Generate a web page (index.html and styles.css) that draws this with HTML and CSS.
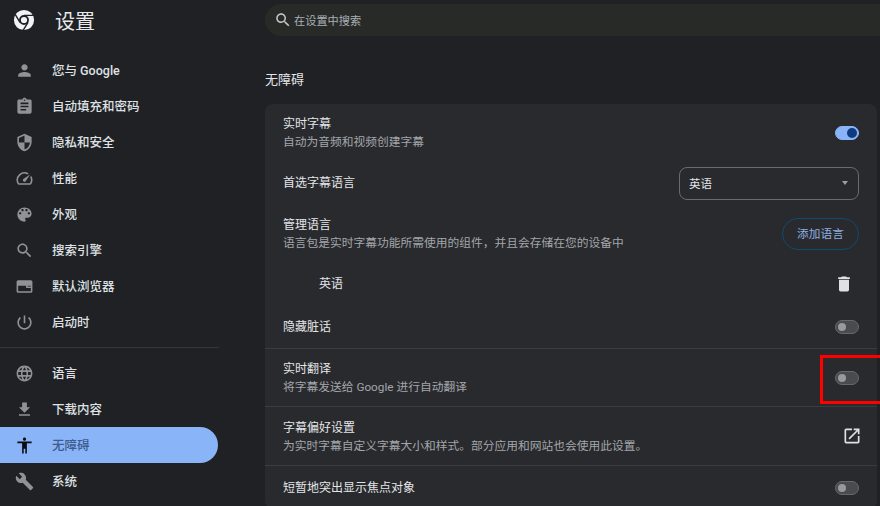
FILE: index.html
```html
<!DOCTYPE html>
<html lang="zh-CN">
<head>
<meta charset="utf-8">
<title>设置</title>
<link rel="stylesheet" href="styles.css">
</head>
<body>
<div class="app">
  <aside class="sidebar">
    <header class="brand">
      <svg class="logo" viewBox="0 0 24 24"><path class="logo-fill" fill-rule="evenodd" d="M12 1a11 11 0 1 1 0 22 11 11 0 0 1 0-22zm0 5.6a5.4 5.4 0 1 0 0 10.8 5.4 5.4 0 0 0 0-10.8z"/><circle class="logo-fill" cx="12" cy="12" r="3.4"/><path class="logo-cut" d="M12 6.9h10.2M7.6 14.6 2.4 5.8M16.4 14.6 11 23.4"/></svg>
      <h1 class="brand-title">设置</h1>
    </header>
    <nav class="nav">
      <a class="nav-item"><svg class="nav-icon" viewBox="0 0 24 24"><path d="M12 12c2.21 0 4-1.79 4-4s-1.79-4-4-4-4 1.79-4 4 1.79 4 4 4zm0 2c-2.67 0-8 1.34-8 4v2h16v-2c0-2.66-5.33-4-8-4z"/></svg><span class="nav-label">您与 Google</span></a>
      <a class="nav-item"><svg class="nav-icon" viewBox="0 0 24 24"><path d="M19 3h-4.18C14.4 1.84 13.3 1 12 1c-1.3 0-2.4.84-2.82 2H5c-1.1 0-2 .9-2 2v14c0 1.1.9 2 2 2h14c1.1 0 2-.9 2-2V5c0-1.1-.9-2-2-2zm-7 0c.55 0 1 .45 1 1s-.45 1-1 1-1-.45-1-1 .45-1 1-1zm2 14H7v-2h7v2zm3-4H7v-2h10v2zm0-4H7V7h10v2z"/></svg><span class="nav-label">自动填充和密码</span></a>
      <a class="nav-item"><svg class="nav-icon" viewBox="0 0 24 24"><path d="M12 1L3 5v6c0 5.55 3.84 10.74 9 12 5.16-1.26 9-6.45 9-12V5l-9-4zm0 10.99h7c-.53 4.12-3.28 7.79-7 8.94V12H5V6.3l7-3.11v8.8z"/></svg><span class="nav-label">隐私和安全</span></a>
      <a class="nav-item"><svg class="nav-icon" viewBox="0 0 24 24"><path d="M20.38 8.57l-1.23 1.85a8 8 0 0 1-.22 7.58H5.07A8 8 0 0 1 15.58 6.85l1.85-1.23A10 10 0 0 0 3.35 19a2 2 0 0 0 1.72 1h13.85a2 2 0 0 0 1.74-1 10 10 0 0 0-.27-10.44zm-9.79 6.84a2 2 0 0 0 2.83 0l5.66-8.49-8.49 5.66a2 2 0 0 0 0 2.83z"/></svg><span class="nav-label">性能</span></a>
      <a class="nav-item"><svg class="nav-icon" viewBox="0 0 24 24"><path d="M12 3c-4.97 0-9 4.03-9 9s4.03 9 9 9c.83 0 1.5-.67 1.5-1.5 0-.39-.15-.74-.39-1.01-.23-.26-.38-.61-.38-.99 0-.83.67-1.5 1.5-1.5H16c2.76 0 5-2.24 5-5 0-4.42-4.03-8-9-8zm-5.5 9c-.83 0-1.5-.67-1.5-1.5S5.67 9 6.5 9 8 9.67 8 10.5 7.33 12 6.5 12zm3-4C8.67 8 8 7.33 8 6.5S8.67 5 9.5 5s1.5.67 1.5 1.5S10.33 8 9.5 8zm5 0c-.83 0-1.5-.67-1.5-1.5S13.67 5 14.5 5s1.5.67 1.5 1.5S15.33 8 14.5 8zm3 4c-.83 0-1.5-.67-1.5-1.5S16.67 9 17.5 9s1.5.67 1.5 1.5-.67 1.5-1.5 1.5z"/></svg><span class="nav-label">外观</span></a>
      <a class="nav-item"><svg class="nav-icon" viewBox="0 0 24 24"><path d="M15.5 14h-.79l-.28-.27C15.41 12.59 16 11.11 16 9.5 16 5.91 13.09 3 9.5 3S3 5.91 3 9.5 5.91 16 9.5 16c1.61 0 3.09-.59 4.23-1.57l.27.28v.79l5 4.99L20.49 19l-4.99-5zm-6 0C7.01 14 5 11.99 5 9.5S7.01 5 9.5 5 14 7.01 14 9.5 11.99 14 9.5 14z"/></svg><span class="nav-label">搜索引擎</span></a>
      <a class="nav-item"><svg class="nav-icon" viewBox="0 0 24 24"><path d="M20 4H4c-1.1 0-2 .9-2 2v12c0 1.1.9 2 2 2h16c1.1 0 2-.9 2-2V6c0-1.1-.9-2-2-2zm0 14H4v-7h10v3h6v4zm0-6h-4v-1h4v1z"/></svg><span class="nav-label">默认浏览器</span></a>
      <a class="nav-item"><svg class="nav-icon" viewBox="0 0 24 24"><path d="M13 3h-2v10h2V3zm4.83 2.17l-1.42 1.42C17.99 7.86 19 9.81 19 12c0 3.87-3.13 7-7 7s-7-3.13-7-7c0-2.19 1.01-4.14 2.58-5.42L6.17 5.17C4.23 6.82 3 9.26 3 12c0 4.97 4.03 9 9 9s9-4.03 9-9c0-2.74-1.23-5.18-3.17-6.83z"/></svg><span class="nav-label">启动时</span></a>
      <hr class="nav-divider">
      <a class="nav-item"><svg class="nav-icon" viewBox="0 0 24 24"><path d="M11.99 2C6.47 2 2 6.48 2 12s4.47 10 9.99 10C17.52 22 22 17.52 22 12S17.52 2 11.99 2zm6.93 6h-2.95c-.32-1.25-.78-2.45-1.38-3.56 1.84.63 3.37 1.91 4.33 3.56zM12 4.04c.83 1.2 1.48 2.53 1.91 3.96h-3.82c.43-1.43 1.08-2.76 1.91-3.96zM4.26 14C4.1 13.36 4 12.69 4 12s.1-1.36.26-2h3.38c-.08.66-.14 1.32-.14 2 0 .68.06 1.34.14 2H4.26zm.82 2h2.95c.32 1.25.78 2.45 1.38 3.56-1.84-.63-3.37-1.9-4.33-3.56zm2.95-8H5.08c.96-1.66 2.49-2.93 4.33-3.56C8.81 5.55 8.35 6.75 8.03 8zM12 19.96c-.83-1.2-1.48-2.53-1.91-3.96h3.82c-.43 1.43-1.08 2.76-1.91 3.96zM14.34 14H9.66c-.09-.66-.16-1.32-.16-2 0-.68.07-1.35.16-2h4.68c.09.65.16 1.32.16 2 0 .68-.07 1.34-.16 2zm.25 5.56c.6-1.11 1.06-2.31 1.38-3.56h2.95c-.96 1.65-2.49 2.93-4.33 3.56zM16.36 14c.08-.66.14-1.32.14-2 0-.68-.06-1.34-.14-2h3.38c.16.64.26 1.31.26 2s-.1 1.36-.26 2h-3.38z"/></svg><span class="nav-label">语言</span></a>
      <a class="nav-item"><svg class="nav-icon" viewBox="0 0 24 24"><path d="M19 9h-4V3H9v6H5l7 7 7-7zM5 18v2h14v-2H5z"/></svg><span class="nav-label">下载内容</span></a>
      <a class="nav-item nav-item-active"><svg class="nav-icon" viewBox="0 0 24 24"><path d="M12 2c1.1 0 2 .9 2 2s-.9 2-2 2-2-.9-2-2 .9-2 2-2zm9 7h-6v13h-2v-6h-2v6H9V9H3V7h18v2z"/></svg><span class="nav-label">无障碍</span></a>
      <a class="nav-item"><svg class="nav-icon" viewBox="0 0 24 24"><path d="M22.7 19l-9.1-9.1c.9-2.3.4-5-1.5-6.9-2-2-5-2.4-7.4-1.3L9 6 6 9 1.6 4.7C.4 7.1.9 10.1 2.9 12.1c1.9 1.9 4.6 2.4 6.9 1.5l9.1 9.1c.4.4 1 .4 1.4 0l2.3-2.3c.5-.4.5-1.1.1-1.4z"/></svg><span class="nav-label">系统</span></a>
    </nav>
  </aside>
  <main class="main">
    <div class="search">
      <svg class="search-icon" viewBox="0 0 24 24"><path d="M15.5 14h-.79l-.28-.27C15.41 12.59 16 11.11 16 9.5 16 5.91 13.09 3 9.5 3S3 5.91 3 9.5 5.91 16 9.5 16c1.61 0 3.09-.59 4.23-1.57l.27.28v.79l5 4.99L20.49 19l-4.99-5zm-6 0C7.01 14 5 11.99 5 9.5S7.01 5 9.5 5 14 7.01 14 9.5 11.99 14 9.5 14z"/></svg>
      <span class="search-text">在设置中搜索</span>
    </div>
    <h2 class="section-title">无障碍</h2>
    <section class="card">
      <div class="row row-first">
        <div class="row-text"><div class="row-title">实时字幕</div><div class="row-sub">自动为音频和视频创建字幕</div></div>
        <span class="toggle toggle-on"></span>
      </div>
      <div class="row row-select">
        <div class="row-title">首选字幕语言</div>
        <div class="select"><span>英语</span><span class="select-caret"></span></div>
      </div>
      <div class="row row-tall">
        <div class="row-text"><div class="row-title">管理语言</div><div class="row-sub">语言包是实时字幕功能所需使用的组件，并且会存储在您的设备中</div></div>
        <button class="btn">添加语言</button>
      </div>
      <div class="row row-lang">
        <div class="row-title">英语</div>
        <svg class="row-icon row-icon-trash" viewBox="0 0 24 24"><path d="M6 19c0 1.1.9 2 2 2h8c1.1 0 2-.9 2-2V7H6v12zM19 4h-3.5l-1-1h-5l-1 1H5v2h14V4z"/></svg>
      </div>
      <div class="row row-short">
        <div class="row-title">隐藏脏话</div>
        <span class="toggle"></span>
      </div>
      <div class="row row-tall row-sep">
        <div class="row-text"><div class="row-title">实时翻译</div><div class="row-sub">将字幕发送给 Google 进行自动翻译</div></div>
        <span class="toggle"></span>
      </div>
      <div class="row row-first row-sep">
        <div class="row-text"><div class="row-title">字幕偏好设置</div><div class="row-sub">为实时字幕自定义字幕大小和样式。部分应用和网站也会使用此设置。</div></div>
        <svg class="row-icon" viewBox="0 0 24 24"><path d="M19 19H5V5h7V3H5a2 2 0 0 0-2 2v14a2 2 0 0 0 2 2h14c1.1 0 2-.9 2-2v-7h-2v7zM14 3v2h3.59l-9.83 9.83 1.41 1.41L19 6.41V10h2V3h-7z"/></svg>
      </div>
      <div class="row row-short row-sep">
        <div class="row-title">短暂地突出显示焦点对象</div>
        <span class="toggle"></span>
      </div>
    </section>
  </main>
</div>
<div class="highlight"></div>
</body>
</html>
```
FILE: styles.css
```css
* { box-sizing: border-box; }
html, body { margin: 0; height: 100%; overflow: hidden; }
body {
  background: #202124;
  color: #e8eaed;
  font-family: Roboto, "Noto Sans CJK SC", sans-serif;
  font-size: 12px;
  position: relative;
}
.app { display: flex; height: 506px; overflow: hidden; }
.sidebar { width: 265px; flex: none; padding-right: 47px; }
.brand { height: 52px; display: flex; align-items: flex-start; padding: 9px 0 0 13px; gap: 20px; }
.logo { width: 22px; height: 22px; flex: none; }
.logo-fill { fill: #f1f3f4; }
.logo-cut { fill: none; stroke: #202124; stroke-width: 1.5; }
.brand-title { margin: 0; font-size: 20px; line-height: 26px; font-weight: 400; color: #e8eaed; }
.nav { display: flex; flex-direction: column; }
.nav-item { display: flex; align-items: center; height: 36px; padding-left: 15px; gap: 18px; font-size: 12.5px; font-weight: 500; color: #dfe1e4; border-radius: 0 18px 18px 0; }
.nav-label { margin-bottom: 2px; }
.nav-icon { width: 19px; height: 19px; flex: none; fill: #8f9398; }
.nav-item-active { background: #8ab4f8; color: #3e5c8e; }
.nav-item-active .nav-icon { fill: #0c0d10; }
.nav-divider { margin: 7px 0; border: 0; border-top: 1px solid #36373a; width: 219px; }
.main { flex: 1; min-width: 0; padding: 4px 3px 0 0; display: flex; flex-direction: column; }
.search { height: 32px; flex: none; margin-right: -3px; background: #282a28; border-radius: 16px 0 0 16px; display: flex; align-items: center; padding-left: 9px; gap: 2px; }
.search-icon { width: 18px; height: 18px; fill: #c4c7cb; flex: none; }
.search-text { font-size: 11.2px; color: #a9afb4; }
.section-title { margin: 35px 0 15px; font-size: 13px; line-height: 18px; font-weight: 400; color: #e3e5e8; }
.card { flex: none; background: #292a2d; border-radius: 8px; padding: 0 18px; }
.row { display: flex; align-items: center; justify-content: space-between; }
.row-tall { height: 58px; }
.row-first { height: 59px; }
.row-select { height: 42px; }
.row-lang { height: 42px; padding-left: 36px; }
.row-short { height: 43px; }
.row-sep { border-top: 1px solid #3b3c3f; margin: 0 -18px; padding: 0 18px; }
.row-short.row-sep { height: 44px; }
.row-text { display: flex; flex-direction: column; gap: 2px; }
.row-sep .row-text { margin-top: 2px; }
.row-title { font-size: 12px; line-height: 16px; color: #e3e5e8; }
.row-select .row-title { margin-bottom: 2px; }
.row-sub { font-size: 11.75px; line-height: 16px; color: #a2a6ab; margin-bottom: 1px; }
.toggle { width: 24px; height: 14px; flex: none; border-radius: 7px; background: #4a4b4e; border: 1px solid #66686b; position: relative; }
.toggle::after { content: ""; position: absolute; top: 2px; left: 2px; width: 8px; height: 8px; border-radius: 50%; background: #98999b; }
.toggle-on { background: #8ab4f8; border-color: #8ab4f8; margin-bottom: 1px; }
.toggle-on::after { left: 11px; top: 1px; width: 10px; height: 10px; background: #0e3a80; }
.select { width: 180px; height: 33px; margin-bottom: 2px; border: 1px solid #6a6b6e; border-radius: 8px; display: flex; align-items: center; justify-content: space-between; padding: 0 10px 0 9px; font-size: 11.5px; color: #e3e5e8; }
.select-caret { width: 0; height: 0; border: 3.5px solid transparent; border-top: 4px solid #9aa0a6; border-bottom: 0; }
.btn { width: 77px; height: 32px; margin-bottom: 1px; border: 1px solid #0f4a70; border-radius: 16px; background: transparent; color: #8fb0e2; font-family: inherit; font-size: 11.7px; padding: 0 0 3px; }
.row-icon { width: 20px; height: 20px; fill: #dfe1e4; flex: none; margin-right: -3px; }
.row-icon-trash { margin-right: 5px; }
.highlight { position: absolute; left: 820px; top: 355px; width: 63px; height: 49px; border: 3px solid #ff0000; }
```
